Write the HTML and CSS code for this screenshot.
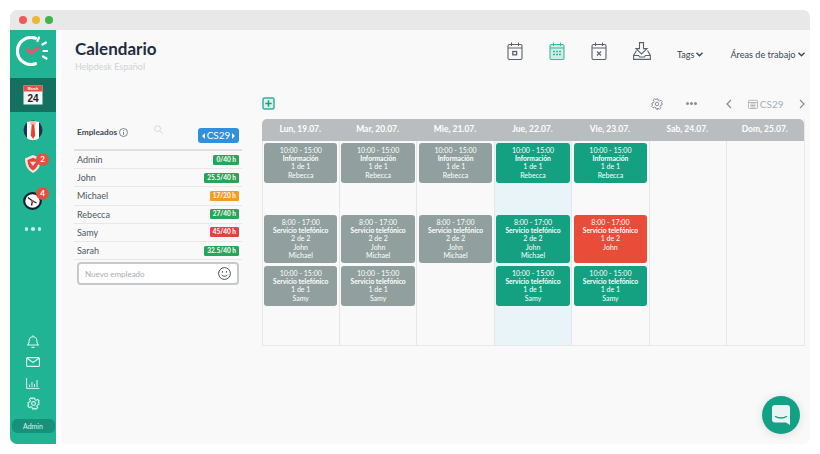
FILE: index.html
```html
<!DOCTYPE html>
<html lang="es">
<head>
<meta charset="utf-8">
<title>Calendario</title>
<link rel="stylesheet" href="styles.css">
</head>
<body>
<div class="window">
  <div class="titlebar">
    <span class="light red"></span><span class="light yellow"></span><span class="light green"></span>
  </div>
  <div class="app">
    <nav class="sidebar">
      <div class="logo">
        <svg width="32" height="30" viewBox="0 0 32 30" fill="none" stroke="#fff" stroke-linecap="round">
          <path d="M19.500 2.300A13.500 13.500 0 1 0 19.500 27.700" stroke-width="3.200"/>
          <path d="M23 1.500L21.500 5M30 6.500L26.500 8.500M31.500 15H27.500M30.500 22.500L27 20.500" stroke-width="2.200"/>
          <path d="M11.500 13.500L15 17L22 12" stroke="#e9546b" stroke-width="3"/>
        </svg>
      </div>
      <div class="nav-active">
        <svg width="20" height="20" viewBox="0 0 20 20">
          <rect x="0.500" y="0.500" width="19" height="19" fill="#f4f6f7"/>
          <rect x="0.500" y="0.500" width="19" height="6" fill="#e8503e"/>
          <text x="10" y="5" text-anchor="middle" class="cal-month">March</text>
          <text x="10" y="16.500" text-anchor="middle" class="cal-num">24</text>
        </svg>
      </div>
      <div class="nav-item nav-tie">
        <svg width="20" height="20" viewBox="0 0 20 20">
          <circle cx="10" cy="10" r="9.500" fill="#1e3350"/>
          <path d="M4 1.800h12v16.400a9.500 9.500 0 0 1-12 0z" fill="#fff"/>
          <path d="M6 1h8l-2 4H8z" fill="#f0b9a8"/>
          <path d="M8.700 4.500h2.600l.9 11-2.200 3.500-2.200-3.500z" fill="#e8402f"/>
        </svg>
      </div>
      <div class="nav-item nav-shield">
        <svg width="16" height="18" viewBox="0 0 16 18">
          <path d="M0 3.500L8 0l8 3.500c0 7-2.500 11.500-8 14.500C2.500 15 0 10.500 0 3.500z" fill="#f6e6df"/>
          <path d="M2.500 5L8 2.700 13.500 5c0 5-1.800 8.500-5.500 10.500C4.300 13.500 2.500 10 2.500 5z" fill="#e2463c"/>
          <path d="M4.800 6.800h6.400L8 11z" fill="#f8dcd6"/>
        </svg>
        <span class="count count-shield">2</span>
      </div>
      <div class="nav-item nav-clock">
        <svg width="20" height="18" viewBox="0 0 20 18">
          <ellipse cx="9.500" cy="9" rx="8.300" ry="7.800" fill="#fff" stroke="#16202c" stroke-width="2.200"/>
          <path d="M9.500 9L5 5.500M9.500 9l-1 4.500M9.500 9l4 2" stroke="#16202c" stroke-width="1.300"/>
          <circle cx="9.500" cy="9" r="1.200" fill="#e2463c"/>
        </svg>
        <span class="count count-clock">4</span>
      </div>
      <div class="nav-dots"><i></i><i></i><i></i></div>
      <div class="nav-bottom">
        <svg width="12" height="13" viewBox="0 0 12 13" fill="none" stroke="#d6f7ee" stroke-width="1.100"><path d="M.7 10c1.200-1 1.500-2.200 1.500-4.500a3.800 3.800 0 0 1 7.600 0c0 2.300.3 3.500 1.500 4.500zM4.500 12.400h3M6 1.700V.3"/></svg>
        <svg width="14" height="10" viewBox="0 0 14 10" fill="none" stroke="#d6f7ee" stroke-width="1.100"><rect x="0.600" y="0.600" width="12.800" height="8.800" rx="1"/><path d="M1 1.200l6 4.300 6-4.300"/></svg>
        <svg class="chart" width="14" height="11" viewBox="0 0 14 11" fill="none" stroke="#d6f7ee" stroke-width="1"><path d="M.6 0v10.400H13.400M3.500 9V6.500M6 9V4M8.500 9V6M11 9V2"/></svg>
        <svg width="13" height="13" viewBox="0 0 24 24" fill="none" stroke="#d6f7ee" stroke-width="2"><circle cx="12" cy="12" r="3.500"/><path d="M10 2h4l.6 3 2.500 1.100 2.600-1.700 2.800 2.800-1.700 2.600L22 10v4l-3 .6-1 2.500 1.700 2.600-2.800 2.800-2.600-1.700-2.300 1L14 22h-4l-.6-3-2.500-1-2.600 1.700-2.800-2.800 1.700-2.600L2 14v-4l3-.6 1.100-2.500-1.700-2.700 2.800-2.800 2.500 1.700z" stroke-linejoin="round"/></svg>
      </div>
      <div class="admin">Admin</div>
    </nav>
    <main class="main">
      <header class="top">
        <div class="heading">
          <h1>Calendario</h1>
          <p>Helpdesk Español</p>
        </div>
        <div class="top-tools">
          <svg class="tool-icon" width="16" height="18" viewBox="0 0 16 18" fill="none" stroke="#5a636d" stroke-width="1.100"><rect x="1" y="2.500" width="14" height="15" rx="1.500"/><path d="M1 6h14M4.500 .5v3.500M11.500 .5v3.500"/><rect x="5.800" y="9.500" width="3.800" height="3.300" stroke-width="1.300"/></svg>
          <svg class="tool-icon" width="16" height="18" viewBox="0 0 16 18" fill="none" stroke="#3fb8a0" stroke-width="1.100"><rect x="1" y="2.500" width="14" height="15" rx="1.500" fill="#cdeee6"/><path d="M1 6h14M4.500 .5v3.500M11.500 .5v3.500"/><path d="M4.200 9.500h1.600M7.200 9.500h1.600M10.200 9.500h1.600M4.200 12.500h1.600M7.200 12.500h1.600M10.200 12.500h1.600" stroke="#2d9d88" stroke-width="1.400"/></svg>
          <svg class="tool-icon" width="16" height="18" viewBox="0 0 16 18" fill="none" stroke="#5a636d" stroke-width="1.100"><rect x="1" y="2.500" width="14" height="15" rx="1.500"/><path d="M1 6h14M4.500 .5v3.500M11.500 .5v3.500M6 9.500l4 4M10 9.500l-4 4"/></svg>
          <svg class="tool-icon" width="18" height="18" viewBox="0 0 18 18" fill="none" stroke="#5a636d" stroke-width="1.100"><path d="M6.500 .6h4v6H14L8.500 12 3 6.600h3.500z"/><path d="M3.500 8.500L.6 13.500v3.900h16.800v-3.900L14.500 8.500M.6 13.500h5l1 1.500h4.800l1-1.500h5"/></svg>
          <span class="drop drop-tags">Tags <svg width="7" height="5" viewBox="0 0 7 5" fill="none" stroke="#3d4752" stroke-width="1.400"><path d="M.5 .7l3 3 3-3"/></svg></span>
          <span class="drop">Áreas de trabajo <svg width="7" height="5" viewBox="0 0 7 5" fill="none" stroke="#3d4752" stroke-width="1.400"><path d="M.5 .7l3 3 3-3"/></svg></span>
        </div>
      </header>
      <div class="content">
        <aside class="staff">
          <div class="staff-head">
            <span class="staff-title">Empleados</span>
            <svg class="info" width="9" height="9" viewBox="0 0 9 9" fill="none" stroke="#4d5661" stroke-width=".7"><circle cx="4.500" cy="4.500" r="4"/><path d="M4.500 4v2.800M4.500 2.200v1"/></svg>
            <svg class="search" width="9" height="9" viewBox="0 0 9 9" fill="none" stroke="#d3d6d9" stroke-width="1"><circle cx="3.600" cy="3.600" r="2.900"/><path d="M5.800 5.800L8.700 8.700"/></svg>
            <span class="week-btn"><i class="arr arr-l"></i>CS29<i class="arr arr-r"></i></span>
          </div>
          <ul class="staff-list">
            <li><span>Admin</span><b class="hours ok">0/40 h</b></li>
            <li><span>John</span><b class="hours ok">25.5/40 h</b></li>
            <li><span>Michael</span><b class="hours warn">17/20 h</b></li>
            <li><span>Rebecca</span><b class="hours ok">27/40 h</b></li>
            <li><span>Samy</span><b class="hours over">45/40 h</b></li>
            <li><span>Sarah</span><b class="hours ok">32.5/40 h</b></li>
          </ul>
          <div class="new-staff">
            <span>Nuevo empleado</span>
            <svg width="13" height="13" viewBox="0 0 13 13" fill="none" stroke="#333b44" stroke-width=".9"><circle cx="6.500" cy="6.500" r="5.900"/><path d="M3.500 7.800c1.500 2 4.500 2 6 0"/><path d="M4.500 4.300v1.200M8.500 4.300v1.200" stroke-width="1.200"/></svg>
          </div>
        </aside>
        <section class="calendar">
          <div class="cal-tools">
            <svg width="13" height="13" viewBox="0 0 13 13" fill="none" stroke="#2fb39b" stroke-width="1.500"><rect x="1" y="1" width="11" height="11" rx="1.500" fill="#d6f3ec"/><path d="M6.500 3.300v6.400M3.300 6.500h6.400" stroke="#1f9c86"/></svg>
            <div class="cal-right">
              <svg class="t-gear" width="12" height="12" viewBox="0 0 24 24" fill="none" stroke="#7d858d" stroke-width="1.800"><circle cx="12" cy="12" r="3.500"/><path d="M10 2h4l.6 3 2.500 1.100 2.600-1.700 2.800 2.800-1.700 2.600L22 10v4l-3 .6-1 2.500 1.700 2.600-2.800 2.800-2.600-1.700-2.300 1L14 22h-4l-.6-3-2.500-1-2.600 1.700-2.800-2.800 1.700-2.600L2 14v-4l3-.6 1.100-2.500-1.700-2.700 2.800-2.800 2.500 1.700z" stroke-linejoin="round"/></svg>
              <span class="t-dots"><i></i><i></i><i></i></span>
              <svg class="t-prev" width="6" height="10" viewBox="0 0 6 10" fill="none" stroke="#7d858d" stroke-width="1.100"><path d="M5 .8L1 5l4 4.200"/></svg>
              <svg class="t-cal" width="10" height="10" viewBox="0 0 10 10" fill="none" stroke="#aab0b5" stroke-width=".9"><rect x=".5" y="1.300" width="9" height="8.200" rx=".8"/><path d="M.5 3.500h9M2.500 5h5M2.500 6.500h5M2.500 8h5"/></svg>
              <span class="t-week">CS29</span>
              <svg width="6" height="10" viewBox="0 0 6 10" fill="none" stroke="#7d858d" stroke-width="1.100"><path d="M1 .8L5 5 1 9.200"/></svg>
            </div>
          </div>
          <div class="cal-grid">
            <div class="day-head">Lun, 19.07.</div>
            <div class="day-head">Mar, 20.07.</div>
            <div class="day-head">Mie, 21.07.</div>
            <div class="day-head">Jue, 22.07.</div>
            <div class="day-head">Vie, 23.07.</div>
            <div class="day-head">Sab, 24.07.</div>
            <div class="day-head">Dom, 25.07.</div>

            <div class="day">
              <div class="shift past"><span>10:00 - 15:00</span><b>Información</b><span>1 de 1</span><span>Rebecca</span></div>
              <div class="shift past tall"><span>8:00 - 17:00</span><b>Servicio telefónico</b><span>2 de 2</span><span>John</span><span>Michael</span></div>
              <div class="shift past"><span>10:00 - 15:00</span><b>Servicio telefónico</b><span>1 de 1</span><span>Samy</span></div>
            </div>
            <div class="day">
              <div class="shift past"><span>10:00 - 15:00</span><b>Información</b><span>1 de 1</span><span>Rebecca</span></div>
              <div class="shift past tall"><span>8:00 - 17:00</span><b>Servicio telefónico</b><span>2 de 2</span><span>John</span><span>Michael</span></div>
              <div class="shift past"><span>10:00 - 15:00</span><b>Servicio telefónico</b><span>1 de 1</span><span>Samy</span></div>
            </div>
            <div class="day">
              <div class="shift past"><span>10:00 - 15:00</span><b>Información</b><span>1 de 1</span><span>Rebecca</span></div>
              <div class="shift past tall"><span>8:00 - 17:00</span><b>Servicio telefónico</b><span>2 de 2</span><span>John</span><span>Michael</span></div>
            </div>
            <div class="day today">
              <div class="shift full"><span>10:00 - 15:00</span><b>Información</b><span>1 de 1</span><span>Rebecca</span></div>
              <div class="shift full tall"><span>8:00 - 17:00</span><b>Servicio telefónico</b><span>2 de 2</span><span>John</span><span>Michael</span></div>
              <div class="shift full"><span>10:00 - 15:00</span><b>Servicio telefónico</b><span>1 de 1</span><span>Samy</span></div>
            </div>
            <div class="day">
              <div class="shift full"><span>10:00 - 15:00</span><b>Información</b><span>1 de 1</span><span>Rebecca</span></div>
              <div class="shift open tall"><span>8:00 - 17:00</span><b>Servicio telefónico</b><span>1 de 2</span><span>John</span></div>
              <div class="shift full"><span>10:00 - 15:00</span><b>Servicio telefónico</b><span>1 de 1</span><span>Samy</span></div>
            </div>
            <div class="day"></div>
            <div class="day"></div>
          </div>
        </section>
      </div>
      <button class="chat" type="button" aria-label="Chat">
        <svg width="18" height="20" viewBox="0 0 18 20"><path d="M3 0h12a3 3 0 0 1 3 3v17l-4-2.500H3a3 3 0 0 1-3-3V3a3 3 0 0 1 3-3z" fill="#e8f5f2"/><path d="M3.500 11.500c3 2 8 2 11 0" fill="none" stroke="#14a085" stroke-width="1.300" stroke-linecap="round"/></svg>
      </button>
    </main>
  </div>
</div>
</body>
</html>
```

FILE: styles.css
```css
* { box-sizing: border-box; }
html, body { margin: 0; height: 100%; background: #fff; }
body { padding: 10px; font-family: Lato, "Open Sans", sans-serif; color: #3d4752; overflow: hidden; }

.window { height: 434px; width: 800px; display: flex; flex-direction: column; border-radius: 7px; overflow: hidden; background: #f9f9fa; }

.titlebar { height: 20px; flex: none; background: #e8e8e8; display: flex; align-items: center; gap: 5px; padding-left: 9px; }
.light { width: 8px; height: 8px; border-radius: 50%; }
.red { background: #ee5b57; }
.yellow { background: #f2b531; }
.green { background: #3db64b; }

.app { flex: 1; display: flex; min-height: 0; }

.sidebar { width: 46px; flex: none; background: #20b394; display: flex; flex-direction: column; align-items: center; }
.logo { width: 46px; height: 48px; padding: 6px 0 0 6px; }
.nav-active { width: 46px; height: 34px; background: #15715f; display: flex; align-items: center; justify-content: center; }
.cal-num { font: 700 10px "Liberation Sans", sans-serif; fill: #222; }
.cal-month { font: 700 3.500px "Liberation Sans", sans-serif; fill: #fff; }
.nav-item { position: relative; display: flex; justify-content: center; width: 20px; }
.nav-tie { margin-top: 8px; height: 20px; }
.nav-shield { margin-top: 15px; height: 18px; }
.nav-clock { margin-top: 19px; height: 18px; }
.count { position: absolute; right: -6px; width: 13px; height: 13px; border-radius: 50%; background: #e8503e; color: #fff; font-size: 8px; font-weight: 700; line-height: 13px; text-align: center; }
.count-shield { top: -2px; }
.count-clock { top: -5px; }
.nav-dots { display: flex; gap: 3px; margin-top: 17px; }
.nav-dots i { width: 3.500px; height: 3.500px; border-radius: 50%; background: #bdf3e8; }
.nav-bottom { margin-top: auto; display: flex; flex-direction: column; align-items: center; gap: 9px; margin-bottom: 9px; }
.chart { margin: 2px 0 -1px; }
.admin { width: 43px; height: 14px; margin: 0 0 11px; background: #17917a; border-radius: 5px; color: #d6f7ee; font-size: 7px; line-height: 14px; text-align: center; }

.main { position: relative; flex: 1; min-width: 0; border-left: 5px solid #fff; padding-right: 5.500px; }

.top { height: 60px; display: flex; align-items: flex-start; justify-content: space-between; }
.heading { padding: 8px 0 0 14px; }
h1 { margin: 0; font-size: 17px; line-height: 21px; font-weight: 700; color: #1e2d3d; }
p { margin: 2px 0 0; font-size: 9px; line-height: 11px; color: #cfd2d5; }

.top-tools { display: flex; align-items: flex-start; padding-top: 12px; }
.tool-icon { margin-right: 26px; }
.drop { display: flex; align-items: center; gap: 2px; height: 12px; margin-top: 6px; font-size: 9.100px; color: #3d4752; white-space: nowrap; }
.drop-tags { margin-right: 27px; }

.content { display: flex; padding-left: 13px; gap: 19.500px; }

.staff { width: 168px; flex: none; padding-top: 36px; }
.staff-head { position: relative; height: 23px; display: flex; align-items: flex-start; padding-left: 3px; }
.staff-title { font-size: 8.300px; font-weight: 700; line-height: 12px; color: #3d4752; }
.info { margin: 1.500px 0 0 2px; }
.search { margin: -1px 0 0 26px; }
.week-btn { position: absolute; right: 3px; top: 2px; width: 41px; height: 15px; border-radius: 3px; background: #2f90e0; color: #fff; font-size: 10px; line-height: 15px; display: flex; align-items: center; justify-content: center; gap: 2px; }
.arr { width: 0; height: 0; border-style: solid; border-color: transparent; border-width: 3px 0; }
.arr-l { border-right: 3.500px solid #fff; }
.arr-r { border-left: 3.500px solid #fff; }

.staff-list { list-style: none; margin: 0; padding: 0; border-top: 2px solid #dfe0e1; }
.staff-list li { height: 18.200px; display: flex; align-items: center; justify-content: space-between; padding: 0 3px; border-bottom: 1px solid #e8e8e9; font-size: 9px; color: #4d5661; }
.hours { height: 10px; padding: 0 3px; border-radius: 1.500px; color: #fff; font-size: 6.500px; font-weight: 700; line-height: 10px; }
.ok { background: #27a558; }
.warn { background: #f39c1f; }
.over { background: #e2443c; }

.new-staff { display: flex; align-items: center; justify-content: space-between; height: 23px; margin: 2px 3px 0; padding: 0 6px; background: #fff; border: 2px solid #c6c8ca; border-radius: 4px; font-size: 8px; color: #a9adb1; }

.calendar { flex: 1; min-width: 0; }
.cal-tools { height: 29px; display: flex; justify-content: space-between; align-items: flex-start; padding-top: 7px; }
.cal-right { display: flex; align-items: center; height: 13px; }
.t-gear { margin-right: 23px; }
.t-dots { display: flex; gap: 1px; margin-right: 29px; }
.t-dots i { width: 3px; height: 3px; border-radius: 50%; background: #8a9097; }
.t-prev { margin-right: 16px; }
.t-cal { margin-right: 2px; }
.t-week { font-size: 10px; color: #a9aeb3; margin-right: 15px; }

.cal-grid { display: grid; grid-template-columns: repeat(7, 1fr); grid-template-rows: 22px 204px; border-bottom: 1px solid #e8e8e9; border-right: 1px solid #e8e8e9; }
.day-head { background: #b9bdc0; color: #fff; font-size: 8.500px; font-weight: 700; line-height: 20px; text-align: center; }
.day-head:first-child { border-top-left-radius: 5px; }
.day-head:nth-child(7) { border-top-right-radius: 5px; }

.day { display: flex; flex-direction: column; gap: 3px; padding: 2px 1.500px 0; border-left: 1px solid #e6e6e7; }
.today { background: #e9f4f8; }

.shift { height: 40px; padding-top: 3px; border-radius: 3px; color: #fff; text-align: center; font-size: 7px; line-height: 8.200px; display: flex; flex-direction: column; }
.shift b { font-size: 6.700px; font-weight: 700; }
.tall { height: 48px; margin-top: 29px; }
.past { background: #91a09e; }
.full { background: #14a182; }
.open { background: #ea4c3a; }

.chat { position: absolute; right: 10px; bottom: 10px; width: 38px; height: 38px; padding: 0; border: 0; border-radius: 50%; background: #14a085; box-shadow: 0 1px 10px rgba(0,0,0,.12); display: flex; align-items: center; justify-content: center; }
```
